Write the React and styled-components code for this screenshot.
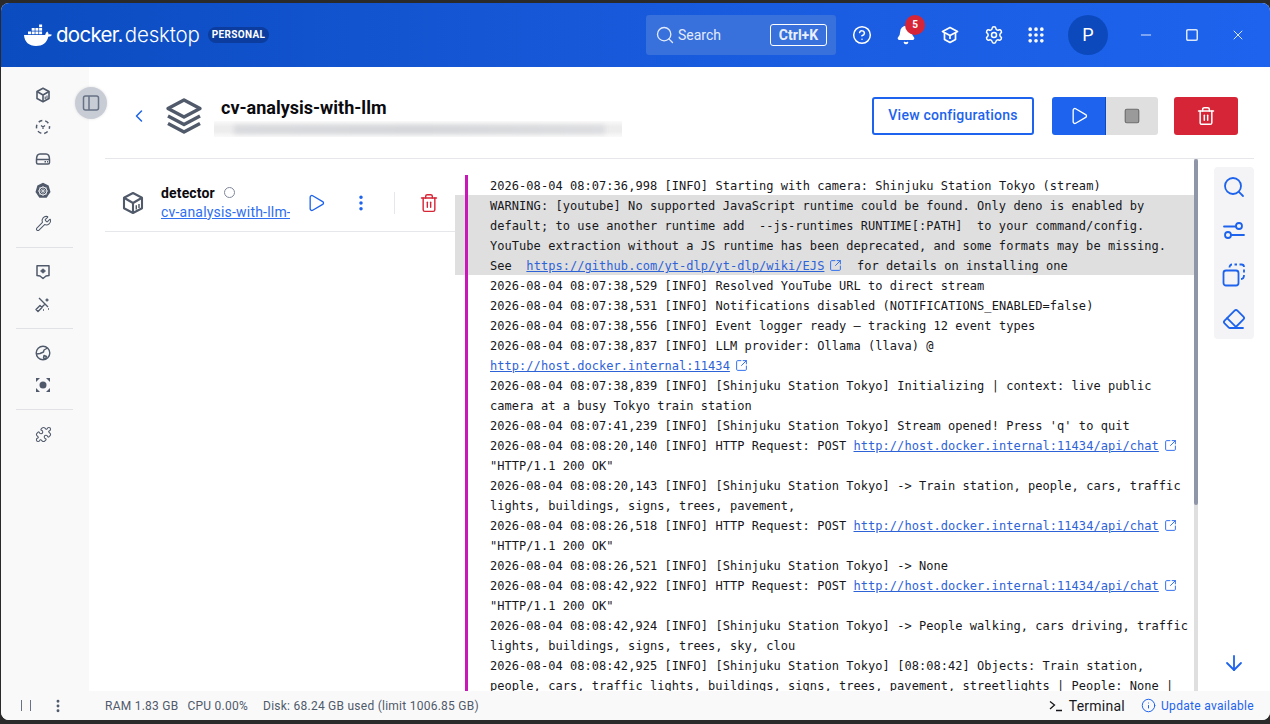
import styled, { createGlobalStyle } from "styled-components";
import {
  ArrowDown,
  Bell,
  ChevronLeft,
  CircleHelp,
  EllipsisVertical,
  Eraser,
  Grip,
  Info,
  Minus,
  Play,
  Puzzle,
  Search,
  Settings,
  Square,
  SquareArrowOutUpRight,
  Trash2,
  Wrench,
  X,
} from "lucide-react";

const GlobalStyle = createGlobalStyle`
  html, body {
    margin: 0;
    height: 100%;
    background: #2a2a2a;
    overflow: hidden;
    font-family: Roboto, "Liberation Sans", sans-serif;
  }
  #root { height: 100%; }
  * { box-sizing: border-box; }
`;

const Desktop = styled.div`
  height: 724px;
  padding: 3px 0 4px 1px;
`;

const Window = styled.div`
  position: relative;
  height: 717px;
  display: flex;
  flex-direction: column;
  background: #fff;
  border-radius: 8px;
  overflow: hidden;
`;

const TopBar = styled.header`
  height: 64px;
  flex: none;
  display: flex;
  align-items: center;
  padding: 0 0 0 22px;
  color: #fff;
  background: linear-gradient(90deg, #0b4cc0 0%, #1a5ce0 60%, #1d63ed 100%);
`;

const Wordmark = styled.div`
  display: flex;
  align-items: baseline;
  margin-left: 3px;
  font-family: Inter, sans-serif;
  font-size: 20.5px;
  letter-spacing: -0.7px;
  line-height: 1;
`;

const WordStrong = styled.span`
  font-weight: 400;
`;

const WordLight = styled.span`
  margin-left: 2px;
  font-weight: 300;
  letter-spacing: -0.15px;
`;

const PlanBadge = styled.span`
  margin-left: 8px;
  padding: 0 4px;
  height: 16px;
  line-height: 16px;
  border-radius: 8px;
  background: #0b3c9e;
  font-size: 10px;
  font-weight: 700;
  letter-spacing: 0.35px;
`;

const SearchBox = styled.div`
  margin-left: auto;
  width: 190px;
  height: 40px;
  display: flex;
  align-items: center;
  gap: 3px;
  padding: 0 9px 0 9px;
  border-radius: 3px;
  background: #3870dc;
  font-size: 14px;
  color: #e3ebfb;
`;

const Shortcut = styled.kbd`
  margin-left: auto;
  height: 22px;
  width: 57px;
  display: flex;
  align-items: center;
  justify-content: center;
  border: 1px solid #fff;
  border-radius: 3px;
  font: 700 14px Roboto, sans-serif;
  color: #e9effc;
`;

const TopIcons = styled.div`
  display: flex;
  align-items: center;
  gap: 12px;
  margin-left: 10px;
`;

const TopIcon = styled.span`
  position: relative;
  width: 32px;
  height: 32px;
  margin-left: ${(p) => (p.$tight ? "-2px" : "0")};
  display: flex;
  align-items: center;
  justify-content: center;
`;

const CountBadge = styled.span`
  position: absolute;
  top: -4px;
  right: -3px;
  width: 20px;
  height: 20px;
  border-radius: 50%;
  background: #d52536;
  font-size: 10px;
  font-weight: 700;
  line-height: 20px;
  text-align: center;
`;

const Avatar = styled.div`
  width: 40px;
  height: 40px;
  margin-left: 16px;
  border-radius: 50%;
  background: #0c49bd;
  font-size: 18px;
  line-height: 40px;
  text-align: center;
`;

const WindowButtons = styled.div`
  display: flex;
  align-items: center;
  gap: 30px;
  margin-left: 30px;
  padding-right: 24px;
  color: #dbe6fb;
`;

const WindowButton = styled.span`
  width: 16px;
  display: flex;
  align-items: center;
  justify-content: center;
`;

const Middle = styled.div`
  flex: 1;
  min-height: 0;
  display: flex;
`;

const Sidebar = styled.nav`
  width: 88px;
  flex: none;
  display: flex;
  flex-direction: column;
  align-items: flex-start;
  padding: 12px 0 0 26px;
  background: #f9f9fa;
  color: #505a6a;
`;

const NavItem = styled.span`
  width: 32px;
  height: 32px;
  display: flex;
  align-items: center;
  justify-content: center;
`;

const NavDivider = styled.hr`
  width: 57px;
  height: 1px;
  margin: 8px 0 8px -11px;
  border: 0;
  background: #e1e2e6;
`;

const DrawerToggle = styled.button`
  position: absolute;
  left: 74px;
  top: 84px;
  width: 32px;
  height: 32px;
  padding: 0;
  display: flex;
  align-items: center;
  justify-content: center;
  border: 0;
  border-radius: 50%;
  background: #c8ccd5;
  color: #677285;
  box-shadow: 0 0 3px rgba(0, 0, 0, 0.12);
`;

const Content = styled.main`
  flex: 1;
  min-width: 0;
  display: flex;
  flex-direction: column;
  padding: 0 16px;
`;

const PageHead = styled.div`
  height: 91px;
  flex: none;
  display: flex;
  align-items: center;
  padding: 7px 16px 0 24px;
`;

const BackLink = styled.span`
  display: flex;
  color: #1d63ed;
`;

const StackIcon = styled.span`
  display: flex;
  margin-left: 16px;
  color: #505a6a;
`;

const TitleBlock = styled.div`
  margin-left: 18px;
  padding-top: 1px;
`;

const Title = styled.h1`
  margin: 0;
  font-size: 18px;
  font-weight: 700;
  line-height: 24px;
  color: #0b0b0f;
`;

const BlurredPath = styled.div`
  width: 408px;
  height: 16px;
  margin: 1px 0 0 -7px;
  padding: 4px 17px 3px 20px;
  overflow: hidden;
  background: linear-gradient(180deg, #fafafa 0%, #ededee 35%, #ededee 65%, #fafafa 100%);
`;

const BlurredText = styled.div`
  height: 100%;
  background: linear-gradient(90deg, #d9dadd 0%, #d4d6d9 50%, #dcdde0 100%);
  filter: blur(2px);
`;

const HeadActions = styled.div`
  margin-left: auto;
  display: flex;
  align-items: center;
`;

const OutlineButton = styled.button`
  width: 162px;
  height: 38px;
  margin-right: 18px;
  padding: 0 0 2px;
  border: 2px solid #1d63ed;
  border-radius: 3px;
  background: #fff;
  color: #1d63ed;
  font: 500 14px Roboto, sans-serif;
  letter-spacing: 0.25px;
`;

const SolidButton = styled.button`
  width: ${(p) => p.$w}px;
  height: 38px;
  padding: 0;
  display: flex;
  align-items: center;
  justify-content: center;
  border: 0;
  border-radius: ${(p) => p.$radius};
  background: ${(p) => p.$bg};
  color: ${(p) => p.$fg};
  margin-right: ${(p) => p.$mr || 0}px;
  border-right: ${(p) => (p.$split ? "1px solid #0c49bd" : "0")};
`;

const Split = styled.div`
  flex: 1;
  min-height: 0;
  display: flex;
  border-top: 1px solid #e6e7ea;
`;

const Services = styled.div`
  width: 350px;
  flex: none;
`;

const ServiceRow = styled.div`
  height: 73px;
  display: flex;
  align-items: center;
  padding: 15px 0 0 16px;
  border-bottom: 1px solid #e6e7ea;
`;

const ServiceIcon = styled.span`
  display: flex;
  color: #505a6a;
`;

const ServiceText = styled.div`
  width: 129px;
  margin-left: 16px;
  overflow: hidden;
`;

const ServiceName = styled.div`
  display: flex;
  align-items: center;
  gap: 9px;
  font-size: 14px;
  font-weight: 700;
  line-height: 18px;
  letter-spacing: 0.15px;
  color: #0b0b0f;
`;

const StatusDot = styled.span`
  width: 11px;
  height: 11px;
  border: 1px solid #80869a;
  border-radius: 50%;
`;

const ServiceLink = styled.a`
  display: block;
  font-size: 14px;
  line-height: 20px;
  letter-spacing: 0.2px;
  white-space: nowrap;
  color: #2e6ef0;
  text-decoration: underline;
`;

const RowAction = styled.span`
  display: flex;
  margin-left: ${(p) => p.$ml}px;
  color: ${(p) => p.$color || "#1d63ed"};
`;

const RowDivider = styled.span`
  width: 1px;
  height: 22px;
  margin-left: 23px;
  background: #e6e7ea;
`;

const LogPane = styled.div`
  position: relative;
  flex: 1;
  min-width: 0;
  padding-top: 16px;
  overflow: hidden;
`;

const LogBody = styled.div`
  position: relative;
  height: 100%;
  margin-left: 10px;
  padding: 1px 0 0 22px;
  border-left: 3px solid #c918b8;
  overflow: hidden;
`;

const LogEntry = styled.div`
  width: 700px;
  font-family: "DejaVu Sans Mono", "Liberation Mono", monospace;
  font-size: 12px;
  letter-spacing: 0.045px;
  line-height: 20px;
  white-space: pre-wrap;
  color: #17171b;
`;

const LogHighlight = styled.div`
  position: absolute;
  left: 0;
  right: 0;
  top: 36px;
  height: 80px;
  background: #dfdfdf;
`;

const LinkGroup = styled.span`
  white-space: nowrap;
`;

const LogLink = styled.a`
  color: #2e63d8;
  text-decoration: underline;
`;

const LinkIcon = styled(SquareArrowOutUpRight)`
  display: inline-block;
  margin-left: 5px;
  color: #2e6ef0;
  vertical-align: -2px;
`;

const ScrollTrack = styled.div`
  position: absolute;
  right: 0;
  top: 0;
  bottom: 0;
  width: 4px;
  background: #dfdfdf;
`;

const ScrollThumb = styled.div`
  width: 4px;
  height: 346px;
  border-radius: 2px;
  background: #8f96a8;
`;

const ToolColumn = styled.aside`
  width: 56px;
  flex: none;
  display: flex;
  flex-direction: column;
  align-items: flex-end;
  justify-content: space-between;
  padding-top: 8px;
  color: #1d63ed;
`;

const ToolGroup = styled.div`
  width: 40px;
  height: 172px;
  display: flex;
  flex-direction: column;
  align-items: center;
  gap: 20px;
  padding-top: 8px;
  border-radius: 4px;
  background: #f4f4f6;
`;

const ScrollDown = styled.span`
  display: flex;
  margin: 0 8px 16px 0;
`;

const StatusBar = styled.footer`
  height: 29px;
  flex: none;
  display: flex;
  align-items: center;
  padding: 0 16px 0 20px;
  background: #f9f9fa;
  font-size: 12px;
  letter-spacing: 0.25px;
  color: #505a6a;
`;

const PauseMark = styled.span`
  width: 10px;
  height: 11px;
  border-left: 1px solid #677285;
  border-right: 1px solid #677285;
`;

const StatusMenu = styled.span`
  display: flex;
  margin-left: 19px;
  color: #505a6a;
`;

const Stat = styled.span`
  margin-left: ${(p) => p.$ml}px;
`;

const TerminalLink = styled.span`
  margin-left: auto;
  display: flex;
  align-items: center;
  gap: 6px;
  font-size: 14px;
  color: #17171b;
`;

const UpdateLink = styled.span`
  display: flex;
  align-items: center;
  gap: 5px;
  margin-left: 16px;
  letter-spacing: 0.3px;
  color: #1d63ed;
`;

const Whale = () => (
  <svg width="30" height="24" viewBox="0 0 30 24" fill="#fff">
    <path d="M1 12h21.2c.4-1.800 1.200-2.900 2.200-3.400.8 1 1.200 2 1.200 2.800 1-.4 2.400-.3 3.400.4-.7 1.300-2 2-3.700 2C23.800 20 19.500 23 13 23 6 23 1.500 19 1 12z" />
    <rect x="5" y="8.500" width="3" height="2.700" />
    <rect x="8.700" y="8.500" width="3" height="2.700" />
    <rect x="12.400" y="8.500" width="3" height="2.700" />
    <rect x="16.100" y="8.500" width="3" height="2.700" />
    <rect x="8.700" y="5" width="3" height="2.700" />
    <rect x="12.400" y="5" width="3" height="2.700" />
    <rect x="16.100" y="5" width="3" height="2.700" />
    <rect x="16.100" y="1.500" width="3" height="2.700" />
  </svg>
);

const Cap = () => (
  <svg width="20" height="20" viewBox="0 0 20 20" fill="none" stroke="currentColor" strokeWidth="1.700" strokeLinejoin="round">
    <path d="M10 2.500 17.500 6.500 10 10.500 2.500 6.500z" />
    <path d="M4.500 8v6.500L10 17.500l5.500-3V8" />
    <path d="M10 10.500V14" />
  </svg>
);

const Cube = ({ size = 16, sw = 1.6 }) => (
  <svg width={size} height={size} viewBox="0 0 16 16" fill="none" stroke="currentColor" strokeWidth={sw} strokeLinejoin="round">
    <path d="M8 1.300 14 4.500v7L8 14.700 2 11.500v-7z" />
    <path d="M2 4.500 8 8l6-3.500M8 8v6.700" />
    <path d="M10.200 9.500v2.800M12 8.600v2.800" strokeWidth={sw * 0.7} />
  </svg>
);

const DashedCube = () => (
  <svg width="16" height="16" viewBox="0 0 16 16" fill="none" stroke="currentColor" strokeWidth="1.500">
    <circle cx="8" cy="8" r="6.500" strokeDasharray="3.800 3" strokeDashoffset="1.900" />
    <path d="M6 6.500 8 8l2-1.500M8 8v2" strokeWidth="1.300" />
  </svg>
);

const Drive = () => (
  <svg width="16" height="16" viewBox="0 0 16 16" fill="none" stroke="currentColor" strokeWidth="1.500" strokeLinejoin="round">
    <path d="M1.500 8.500C1.500 5 3 3 5 3h6c2 0 3.500 2 3.500 5.500v3A1.500 1.500 0 0 1 13 13H3a1.500 1.500 0 0 1-1.500-1.500zM1.500 8.500h13" />
    <path d="M9.500 10.800h1.500M12 10.800h1" />
  </svg>
);

const Helm = () => (
  <svg width="18" height="18" viewBox="0 0 18 18">
    <path fill="currentColor" d="M9 .8l5.600 2.700L16.500 10l-3.900 5.800H5.400L1.500 10l1.900-6.500z" />
    <circle cx="9" cy="9" r="4" fill="none" stroke="#e4e6ea" strokeWidth="1" />
    <path d="M9 4v10M4 9h10M5.500 5.500l7 7M12.500 5.500l-7 7" stroke="#e4e6ea" strokeWidth=".7" />
  </svg>
);

const Shield = () => (
  <svg width="16" height="16" viewBox="0 0 16 16" fill="none" stroke="currentColor" strokeWidth="1.500" strokeLinejoin="round">
    <path d="M2 1.800h12v9.700l-3 .5-3 2.500-3-2.500-3-.5z" />
    <path d="M8 4.800 10.500 7 8 9.200 5.500 7z" fill="currentColor" strokeWidth=".8" />
  </svg>
);

const Scout = () => (
  <svg width="18" height="18" viewBox="0 0 18 18" fill="none" stroke="currentColor" strokeWidth="1.400" strokeLinejoin="round">
    <path d="M2 14.500 6 10.500 8 12.500 4 16.500zM5 3l9 9M8 12l3-3" />
    <path d="M13 3.500v3M11.500 5h3M14 14h1M9 15h1" />
  </svg>
);

const Globe = () => (
  <svg width="16" height="16" viewBox="0 0 16 16" fill="none" stroke="currentColor" strokeWidth="1.400" strokeLinejoin="round">
    <circle cx="8" cy="8" r="6.800" />
    <path d="M12.500 3 9 5 8.500 7 5 8.500 1.500 9M9 10.500l2.500 1-1 2.500-2-1z" />
  </svg>
);

const Focus = () => (
  <svg width="16" height="16" viewBox="0 0 16 16" fill="currentColor">
    <circle cx="8" cy="8" r="3.500" />
    <path d="M1 1h4L1 5zM15 1v4l-4-4zM1 15v-4l4 4zM15 15h-4l4-4z" />
  </svg>
);

const PanelIcon = () => (
  <svg width="18" height="18" viewBox="0 0 18 18" fill="none" stroke="currentColor" strokeWidth="1.500">
    <rect x="1.500" y="2" width="15" height="14" rx="2" />
    <path d="M7 2v14" />
  </svg>
);

const Layers = () => (
  <svg width="38" height="38" viewBox="0 0 38 38" fill="none" stroke="currentColor" strokeWidth="3.400" strokeLinejoin="round">
    <path d="M19 3 35 11.500 19 20 3 11.500z" />
    <path d="M3 19 19 27.500 35 19" />
    <path d="M3 26.500 19 35 35 26.500" />
  </svg>
);

const Sliders = () => (
  <svg width="24" height="24" viewBox="0 0 24 24" fill="none" stroke="currentColor" strokeWidth="1.800" strokeLinecap="round">
    <circle cx="17" cy="7" r="3" />
    <circle cx="6" cy="16" r="3" />
    <path d="M2 7.500h12M9.500 16H22" />
  </svg>
);

const CopyDashed = () => (
  <svg width="24" height="24" viewBox="0 0 24 24" fill="none" stroke="currentColor" strokeWidth="1.800" strokeLinejoin="round">
    <rect x="1.500" y="7.500" width="15" height="15" rx="2.500" />
    <path d="M7.500 4.500C7.500 2.500 8.500 1.500 10 1.500M12.500 1.500h2.500M17.500 1.500h2c1.500 0 2.500 1 2.500 2.500M22 6.500v3M22 12c0 2-1 4-3 4" />
  </svg>
);

const TerminalGlyph = () => (
  <svg width="14" height="12" viewBox="0 0 14 12" fill="none" stroke="currentColor" strokeWidth="1.300">
    <path d="M1 1.500 5.500 5 1 9M7 10.500h6" />
  </svg>
);

const ExtLink = ({ children }) => (
  <LinkGroup>
    <LogLink>{children}</LogLink>
    <LinkIcon size={13} strokeWidth={1.8} />
  </LinkGroup>
);

const Log = ({ t, children }) => (
  <LogEntry>
    2026-08-04 {t} [INFO] {children}
  </LogEntry>
);

const HttpLog = ({ t }) => (
  <LogEntry>
    2026-08-04 {t} [INFO] HTTP Request: POST <ExtLink>http://host.docker.internal:11434/api/chat</ExtLink> "HTTP/1.1 200 OK"
  </LogEntry>
);

export default function App() {
  return (
    <Desktop>
      <GlobalStyle />
      <Window>
        <TopBar>
          <Whale />
          <Wordmark>
            <WordStrong>docker.</WordStrong>
            <WordLight>desktop</WordLight>
          </Wordmark>
          <PlanBadge>PERSONAL</PlanBadge>
          <SearchBox>
            <Search size={20} strokeWidth={1.6} />
            Search
            <Shortcut>Ctrl+K</Shortcut>
          </SearchBox>
          <TopIcons>
            <TopIcon>
              <CircleHelp size={20} strokeWidth={1.8} />
            </TopIcon>
            <TopIcon>
              <Bell size={20} fill="#fff" />
              <CountBadge>5</CountBadge>
            </TopIcon>
            <TopIcon>
              <Cap />
            </TopIcon>
            <TopIcon>
              <Settings size={20} strokeWidth={1.8} />
            </TopIcon>
            <TopIcon $tight>
              <Grip size={20} strokeWidth={2.4} />
            </TopIcon>
          </TopIcons>
          <Avatar>P</Avatar>
          <WindowButtons>
            <WindowButton><Minus size={16} strokeWidth={1.5} /></WindowButton>
            <WindowButton><Square size={14} strokeWidth={1.5} absoluteStrokeWidth /></WindowButton>
            <WindowButton><X size={16} strokeWidth={1.5} /></WindowButton>
          </WindowButtons>
        </TopBar>

        <Middle>
          <Sidebar>
            <NavItem><Cube /></NavItem>
            <NavItem><DashedCube /></NavItem>
            <NavItem><Drive /></NavItem>
            <NavItem><Helm /></NavItem>
            <NavItem><Wrench size={17} strokeWidth={1.5} /></NavItem>
            <NavDivider />
            <NavItem><Shield /></NavItem>
            <NavItem><Scout /></NavItem>
            <NavDivider />
            <NavItem><Globe /></NavItem>
            <NavItem><Focus /></NavItem>
            <NavDivider />
            <NavItem><Puzzle size={17} strokeWidth={1.5} /></NavItem>
          </Sidebar>

          <Content>
            <PageHead>
              <BackLink><ChevronLeft size={20} strokeWidth={1.8} /></BackLink>
              <StackIcon><Layers /></StackIcon>
              <TitleBlock>
                <Title>cv-analysis-with-llm</Title>
                <BlurredPath><BlurredText /></BlurredPath>
              </TitleBlock>
              <HeadActions>
                <OutlineButton>View configurations</OutlineButton>
                <SolidButton $w={54} $bg="#1d63ed" $fg="#fff" $radius="3px 0 0 3px" $split>
                  <Play size={20} strokeWidth={1.6} />
                </SolidButton>
                <SolidButton $w={52} $bg="#dfdfdf" $fg="#6e6e6e" $radius="0 3px 3px 0" $mr={16}>
                  <Square size={18} fill="#9a9a9a" strokeWidth={1.6} />
                </SolidButton>
                <SolidButton $w={64} $bg="#d52536" $fg="#fff" $radius="3px">
                  <Trash2 size={20} strokeWidth={1.8} />
                </SolidButton>
              </HeadActions>
            </PageHead>

            <Split>
              <Services>
                <ServiceRow>
                  <ServiceIcon><Cube size={24} sw={1.4} /></ServiceIcon>
                  <ServiceText>
                    <ServiceName>detector <StatusDot /></ServiceName>
                    <ServiceLink>cv-analysis-with-llm-detector-1</ServiceLink>
                  </ServiceText>
                  <RowAction $ml={16}><Play size={20} strokeWidth={1.6} /></RowAction>
                  <RowAction $ml={25}><EllipsisVertical size={20} strokeWidth={2.2} /></RowAction>
                  <RowDivider />
                  <RowAction $ml={24} $color="#d52536"><Trash2 size={20} strokeWidth={1.7} /></RowAction>
                </ServiceRow>
              </Services>

              <LogPane>
                <LogHighlight />
                <LogBody>
                  <Log t="08:07:36,998">Starting with camera: Shinjuku Station Tokyo (stream)</Log>
                  <LogEntry>
                    WARNING: [youtube] No supported JavaScript runtime could be found. Only deno is enabled by default; to use another runtime add  --js-runtimes RUNTIME[:PATH]  to your command/config. YouTube extraction without a JS runtime has been deprecated, and some formats may be missing. See  <ExtLink>https://github.com/yt-dlp/yt-dlp/wiki/EJS</ExtLink>  for details on installing one
                  </LogEntry>
                  <Log t="08:07:38,529">Resolved YouTube URL to direct stream</Log>
                  <Log t="08:07:38,531">Notifications disabled (NOTIFICATIONS_ENABLED=false)</Log>
                  <Log t="08:07:38,556">Event logger ready — tracking 12 event types</Log>
                  <Log t="08:07:38,837">LLM provider: Ollama (llava) @ <ExtLink>http://host.docker.internal:11434</ExtLink></Log>
                  <Log t="08:07:38,839">[Shinjuku Station Tokyo] Initializing | context: live public camera at a busy Tokyo train station</Log>
                  <Log t="08:07:41,239">[Shinjuku Station Tokyo] Stream opened! Press 'q' to quit</Log>
                  <HttpLog t="08:08:20,140" />
                  <Log t="08:08:20,143">[Shinjuku Station Tokyo] -&gt; Train station, people, cars, traffic lights, buildings, signs, trees, pavement,</Log>
                  <HttpLog t="08:08:26,518" />
                  <Log t="08:08:26,521">[Shinjuku Station Tokyo] -&gt; None</Log>
                  <HttpLog t="08:08:42,922" />
                  <Log t="08:08:42,924">[Shinjuku Station Tokyo] -&gt; People walking, cars driving, traffic lights, buildings, signs, trees, sky, clou</Log>
                  <Log t="08:08:42,925">[Shinjuku Station Tokyo] [08:08:42] Objects: Train station, people, cars, traffic lights, buildings, signs, trees, pavement, streetlights | People: None |</Log>
                </LogBody>
                <ScrollTrack><ScrollThumb /></ScrollTrack>
              </LogPane>

              <ToolColumn>
                <ToolGroup>
                  <Search size={24} strokeWidth={1.8} />
                  <Sliders />
                  <CopyDashed />
                  <Eraser size={24} strokeWidth={1.8} />
                </ToolGroup>
                <ScrollDown><ArrowDown size={24} strokeWidth={1.8} /></ScrollDown>
              </ToolColumn>
            </Split>
          </Content>
        </Middle>

        <DrawerToggle><PanelIcon /></DrawerToggle>

        <StatusBar>
          <PauseMark />
          <StatusMenu><EllipsisVertical size={16} strokeWidth={2.4} /></StatusMenu>
          <Stat $ml={39}>RAM 1.83 GB</Stat>
          <Stat $ml={9}>CPU 0.00%</Stat>
          <Stat $ml={15}>Disk: 68.24 GB used (limit 1006.85 GB)</Stat>
          <TerminalLink><TerminalGlyph /> Terminal</TerminalLink>
          <UpdateLink><Info size={15} strokeWidth={1.6} /> Update available</UpdateLink>
        </StatusBar>
      </Window>
    </Desktop>
  );
}
